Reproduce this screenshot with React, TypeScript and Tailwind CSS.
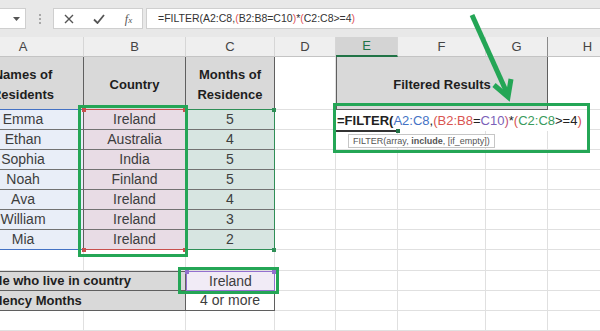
import React from "react";

const GRID = "border-r border-b border-[#e0e0e0]";

function ColHead({ l, active, dark }: { l: string; active?: boolean; dark?: boolean }) {
  return (
    <div
      className={
        "flex items-center justify-center text-[13px] border-r " +
        (dark ? "border-r-[#8a8a8a] " : "border-r-[#d6d6d6] ") +
        (active
          ? "bg-[#d4d4d4] text-[#217346] border-b-2 border-b-[#217346]"
          : "bg-[#efefef] text-[#444] border-b border-b-[#c4c4c4]")
      }
    >
      {l}
    </div>
  );
}

function Blank() {
  return <div className={GRID} />;
}

const names = ["Emma", "Ethan", "Sophia", "Noah", "Ava", "William", "Mia"];
const countries = ["Ireland", "Australia", "India", "Finland", "Ireland", "Ireland", "Ireland"];
const months = ["5", "4", "5", "5", "4", "3", "2"];

export default function App() {
  return (
    <div className="relative w-[600px] h-[331px] overflow-hidden bg-white font-['Liberation_Sans',Arial,sans-serif] text-[#3d3d3d]">
      {/* formula bar */}
      <div className="h-[37px] bg-[#e8e8e8] pt-[8px]">
        <div className="flex h-[21px]">
          <div className="w-[26px] bg-white border border-l-0 border-[#cfcfcf] flex items-center justify-end pr-[5px]">
            <svg width="7" height="4" viewBox="0 0 7 4">
              <path d="M0 0h7L3.5 4z" fill="#555" />
            </svg>
          </div>
          <div className="w-[27px] flex flex-col items-center justify-center gap-[2px]">
            <div className="w-[2px] h-[2px] bg-[#a8a8a8]" />
            <div className="w-[2px] h-[2px] bg-[#a8a8a8]" />
            <div className="w-[2px] h-[2px] bg-[#a8a8a8]" />
          </div>
          <div className="w-[90px] bg-white border border-[#cfcfcf] flex items-center justify-around">
            <svg width="10" height="10" viewBox="0 0 10 10">
              <path d="M1 1L9 9M9 1L1 9" stroke="#555" strokeWidth="1.4" />
            </svg>
            <svg width="12" height="10" viewBox="0 0 12 10">
              <path d="M1 5.5L4.5 9L11 1" stroke="#555" strokeWidth="1.8" fill="none" />
            </svg>
            <span className="font-['Liberation_Serif',serif] italic text-[12px] text-[#555] leading-none">
              f<span className="text-[9px]">x</span>
            </span>
          </div>
          <div className="ml-[3px] flex-1 bg-white border border-r-0 border-[#cfcfcf] flex items-center pl-[11px] text-[10.5px] text-[#333] whitespace-nowrap">
            =FILTER(A2:C8,<span className="text-[#e0525a]">(</span>B2:B8=C10
            <span className="text-[#e0525a]">)</span>*<span className="text-[#e0525a]">(</span>C2:C8&gt;=4
            <span className="text-[#e0525a]">)</span>
          </div>
        </div>
      </div>

      {/* sheet grid */}
      <div className="-ml-[37px] grid grid-cols-[121px_102px_89px_61px_62px_88px_62px_80px] grid-rows-[20px_53px_repeat(7,20px)_21px_20px_20px_20px] text-[14px]">
        {/* column headers */}
        <ColHead l="A" />
        <ColHead l="B" />
        <ColHead l="C" />
        <ColHead l="D" />
        <ColHead l="E" active />
        <ColHead l="F" />
        <ColHead l="G" dark />
        <ColHead l="H" />

        {/* row 1 */}
        <div className="bg-[#d9d9d9] border-r border-r-[#5f5f5f] border-b border-b-[#4472c4] pt-[3px] flex items-center justify-center text-center font-bold text-[13px] leading-[20px] text-[#1e1e1e]">
          Names of
          <br />
          Residents
        </div>
        <div className="bg-[#d9d9d9] border-r border-r-[#5f5f5f] border-b border-b-[#c9504d] pt-[3px] flex items-center justify-center font-bold text-[13px] text-[#1e1e1e]">
          Country
        </div>
        <div className="bg-[#d9d9d9] border-r border-r-[#5f5f5f] border-b border-b-[#2f8f57] pt-[3px] flex items-center justify-center text-center font-bold text-[13px] leading-[20px] text-[#1e1e1e]">
          Months of
          <br />
          Residence
        </div>
        <Blank />
        <div className="col-span-3 bg-[#d9d9d9] border border-t-0 border-[#5f5f5f] pt-[3px] flex items-center justify-center font-bold text-[13px] text-[#1e1e1e]">
          Filtered Results
        </div>
        <Blank />

        {/* data rows */}
        {names.map((n, i) => {
          const last = i === names.length - 1;
          return (
            <React.Fragment key={n}>
              <div
                className={
                  "bg-[#e9eef8] border-r border-r-[#5f5f5f] border-b flex items-center justify-center " +
                  (last ? "border-b-[#4472c4]" : "border-b-[#727272]")
                }
              >
                {n}
              </div>
              <div
                className={
                  "bg-[#e8dce5] border-r border-r-[#5f5f5f] border-b flex items-center justify-center " +
                  (last ? "border-b-[#c9504d]" : "border-b-[#727272]")
                }
              >
                {countries[i]}
              </div>
              <div
                className={
                  "bg-[#d7e5e1] border-r border-r-[#2f8f57] border-b flex items-center justify-center " +
                  (last ? "border-b-[#2f8f57]" : "border-b-[#727272]")
                }
              >
                {months[i]}
              </div>
              <Blank />
              <Blank />
              <Blank />
              <Blank />
              <Blank />
            </React.Fragment>
          );
        })}

        {/* row 9 */}
        <Blank />
        <Blank />
        <Blank />
        <Blank />
        <Blank />
        <Blank />
        <Blank />
        <Blank />

        {/* row 10 */}
        <div className="col-span-2 bg-[#d9d9d9] border-t border-b border-r border-[#5f5f5f] flex items-center pl-[4px] font-bold text-[13px] text-[#1e1e1e] whitespace-nowrap">
          People who live in country
        </div>
        <div className="bg-[#f1ebf6] border border-[#9370cf] flex items-center justify-center">Ireland</div>
        <Blank />
        <Blank />
        <Blank />
        <Blank />
        <Blank />

        {/* row 11 */}
        <div className="col-span-2 bg-[#d9d9d9] border-b border-r border-[#5f5f5f] flex items-center pl-[4px] font-bold text-[13px] text-[#1e1e1e] whitespace-nowrap">
          Residency Months
        </div>
        <div className="bg-white border-b border-r border-[#5f5f5f] flex items-center justify-center">4 or more</div>
        <Blank />
        <Blank />
        <Blank />
        <Blank />
        <Blank />

        {/* row 12 */}
        <Blank />
        <Blank />
        <Blank />
        <Blank />
        <Blank />
        <Blank />
        <Blank />
        <Blank />
      </div>

      {/* reference corner handles */}
      <div className="absolute left-[82px] top-[108px] w-[4px] h-[4px] bg-[#c9504d]" />
      <div className="absolute left-[183px] top-[108px] w-[4px] h-[4px] bg-[#c9504d]" />
      <div className="absolute left-[82px] top-[248px] w-[4px] h-[4px] bg-[#c9504d]" />
      <div className="absolute left-[183px] top-[248px] w-[4px] h-[4px] bg-[#c9504d]" />
      <div className="absolute left-[272px] top-[108px] w-[4px] h-[4px] bg-[#2f8f57]" />
      <div className="absolute left-[272px] top-[248px] w-[4px] h-[4px] bg-[#2f8f57]" />
      <div className="absolute left-[185px] top-[270px] w-[4px] h-[4px] bg-[#9370cf]" />
      <div className="absolute left-[272px] top-[270px] w-[4px] h-[4px] bg-[#9370cf]" />

      {/* in-cell formula editing */}
      <div className="absolute left-[336px] top-[110px] w-[252px] h-[21px] bg-white pl-[1px] text-[13px] leading-[21px] whitespace-nowrap text-[#222]">
        <span className="font-bold">=FILTER(</span>
        <span className="text-[#4472c4]">A2:C8</span>,
        <span className="text-[#d9534f]">(B2:B8</span>=
        <span className="text-[#7b5fb8]">C10</span>
        <span className="text-[#c0507a]">)</span>*
        <span className="text-[#d9534f]">(</span>
        <span className="text-[#3a9b5c]">C2:C8</span>&gt;=4
        <span className="text-[#d9534f]">)</span>
      </div>
      <div className="absolute left-[336px] top-[130px] w-[62px] h-[1.5px] bg-[#333]" />
      <div className="absolute left-[396px] top-[129px] w-[4px] h-[4px] bg-[#217346]" />
      <div className="absolute left-[348px] top-[134px] h-[14px] px-[4px] bg-white border border-[#c6c6c6] text-[9px] leading-[12px] text-[#555] whitespace-nowrap">
        FILTER(array, <span className="font-bold">include</span>, [if_empty])
      </div>

      {/* green highlight rectangles */}
      <div className="absolute left-[78px] top-[105px] w-[110px] h-[152px] border-[3px] border-[#24a656]" />
      <div className="absolute left-[333px] top-[103px] w-[257px] h-[50px] border-[3px] border-[#24a656]" />
      <div className="absolute left-[178px] top-[267px] w-[101px] h-[27px] border-[3px] border-[#24a656]" />

      {/* arrow */}
      <svg className="absolute left-0 top-0 pointer-events-none" width="600" height="331" viewBox="0 0 600 331">
        <path d="M472 15L507 93" stroke="#24a656" strokeWidth="5" fill="none" />
        <path d="M494 85L508 97L511 79" stroke="#24a656" strokeWidth="5" fill="none" strokeLinejoin="miter" />
      </svg>
    </div>
  );
}
